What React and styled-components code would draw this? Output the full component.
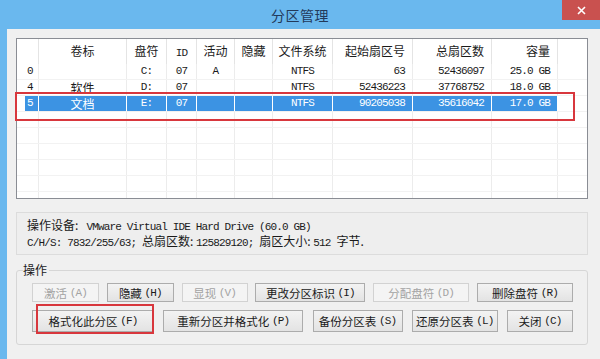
import React from "react";
import styled, { createGlobalStyle } from "styled-components";

const GlobalStyle = createGlobalStyle`
  html, body {
    margin: 0;
    padding: 0;
  }
  body {
    width: 600px;
    height: 359px;
    overflow: hidden;
    background: #f0f0f0;
    font-family: "Noto Sans CJK SC", "Liberation Sans", sans-serif;
    color: #1a1a1a;
  }
`;

const Window = styled.div`
  width: 600px;
  height: 359px;
  display: flex;
  flex-direction: column;
  background: #6ab8ee;
`;

const TitleBar = styled.div`
  height: 29px;
  flex: none;
  display: grid;
  grid-template-columns: 1fr auto 1fr;
  align-items: center;
`;

const Title = styled.div`
  grid-column: 2;
  font-size: 14px;
  color: #22395a;
  letter-spacing: 0.5px;
`;

const CloseButton = styled.div`
  grid-column: 3;
  justify-self: end;
  align-self: start;
  width: 38px;
  height: 20px;
  background: #c9514f;
  display: flex;
  align-items: center;
  justify-content: center;
`;

const Body = styled.div`
  flex: 1;
  margin-left: 7px;
  background: #f0f0f0;
  padding: 9px 12px 0 9px;
  display: flex;
  flex-direction: column;
`;

const Mono = styled.span`
  font-family: "Liberation Mono", "DejaVu Sans Mono", monospace;
  font-size: 11px;
  letter-spacing: -0.85px;
`;

const ListWrap = styled.div`
  position: relative;
`;

const List = styled.div`
  height: 161px;
  box-sizing: border-box;
  border: 1px solid #8a8d94;
  background: #fff;
  overflow: hidden;
`;

const Row = styled.div`
  display: grid;
  grid-template-columns: 22px 88px 40px 30px 38px 38px 60px 80px 79px 66px 1fr;
  height: ${({ $h }) => $h}px;
  box-sizing: border-box;
  border-bottom: 1px solid ${({ $head }) => ($head ? "#fff" : "#f2f2f2")};
`;

const Cell = styled.div`
  text-align: ${({ $align }) => $align};
  padding: ${({ $head }) => ($head ? "0 7px 0 0" : "1px 7px 0 0")};
  border-right: 1px solid ${({ $sel, $head }) => ($sel ? "#fff" : $head ? "#e4e4e4" : "#ececec")};
  background: ${({ $sel }) => ($sel ? "#3c93e3" : "transparent")};
  color: ${({ $sel }) => ($sel ? "#fff" : "#1a1a1a")};
  font-size: 12px;
  line-height: ${({ $head }) => ($head ? 24 : 14)}px;
  white-space: nowrap;

  & > ${Mono} {
    line-height: ${({ $head }) => ($head ? "inherit" : 1)};
    vertical-align: ${({ $head }) => ($head ? 0 : 3)}px;
  }
  &:first-child {
    margin-left: 8px;
    padding-left: 2px;
  }
  &:nth-child(n + 2):nth-child(-n + 7) {
    padding-left: 0;
    padding-right: 0;
  }
  &:last-child {
    border-right: none;
    background: transparent;
  }
`;

const Annot = styled.div`
  position: absolute;
  left: ${({ $x }) => $x}px;
  top: ${({ $y }) => $y}px;
  width: ${({ $w }) => $w}px;
  height: ${({ $h }) => $h}px;
  box-sizing: border-box;
  border: 2px solid #d8373d;
  pointer-events: none;
`;

const InfoBox = styled.div`
  margin-top: 13px;
  height: 43px;
  box-sizing: border-box;
  border: 1px solid #dcdcdc;
  background: #eeeeee;
  padding: 5px 10px 0;
  font-size: 12px;
  line-height: 14px;
  white-space: pre;
`;

const Group = styled.fieldset`
  margin: 8px 0 0;
  padding: 6px 14px 12px 15px;
  border: 1px solid #d6d6d6;
  border-radius: 3px;
  display: flex;
  flex-direction: column;
  gap: 8px;
`;

const Legend = styled.legend`
  margin-left: -9px;
  padding: 0 2px 0 0;
  font-size: 12px;
  line-height: 14px;
`;

const ButtonRow = styled.div`
  display: flex;
  justify-content: space-between;
`;

const Btn = styled.button`
  width: ${({ $w }) => $w}px;
  height: ${({ $tall }) => ($tall ? 22 : 19)}px;
  box-sizing: border-box;
  padding: 0;
  border: 1px solid ${({ disabled }) => (disabled ? "#d2d2d2" : "#acacac")};
  border-radius: 0;
  background: ${({ disabled }) =>
    disabled ? "#f4f4f4" : "linear-gradient(#f3f3f3, #e3e3e3)"};
  color: ${({ disabled }) => (disabled ? "#a3a3a3" : "#1a1a1a")};
  font-family: "Noto Sans CJK SC", sans-serif;
  font-size: 11.5px;
  line-height: 14px;
  display: flex;
  align-items: center;
  justify-content: center;
  white-space: pre;
`;

const Marked = styled.div`
  position: relative;
`;

const columns = ["left", "center", "center", "center", "center", "center", "center", "right", "right", "right", "left"];

const header = ["", "卷标", "盘符", <Mono key="id">ID</Mono>, "活动", "隐藏", "文件系统", "起始扇区号", "总扇区数", "容量", ""];

const partitions = [
  { id: "0", label: "", drive: "C:", type: "07", active: "A", fs: "NTFS", start: "63", total: "52436097", size: "25.0 GB" },
  { id: "4", label: "软件", drive: "D:", type: "07", active: "", fs: "NTFS", start: "52436223", total: "37768752", size: "18.0 GB" },
  { id: "5", label: "文档", drive: "E:", type: "07", active: "", fs: "NTFS", start: "90205038", total: "35616042", size: "17.0 GB", selected: true },
];

const EMPTY_ROWS = 6;

const App = () => {
  return (
    <>
      <GlobalStyle />
      <Window>
        <TitleBar>
          <Title>分区管理</Title>
          <CloseButton>
            <svg width="9" height="9" viewBox="0 0 9 9">
              <path d="M1 1 L8 8 M8 1 L1 8" stroke="#fff" strokeWidth="1.6" />
            </svg>
          </CloseButton>
        </TitleBar>
        <Body>
          <ListWrap>
            <List>
              <Row $h={25} $head>
                {header.map((h, i) => (
                  <Cell key={i} $head $align={columns[i]}>
                    {h}
                  </Cell>
                ))}
              </Row>
              {partitions.map((p) => {
                const values = [
                  <Mono>{p.id}</Mono>,
                  p.label,
                  <Mono>{p.drive}</Mono>,
                  <Mono>{p.type}</Mono>,
                  <Mono>{p.active}</Mono>,
                  "",
                  <Mono>{p.fs}</Mono>,
                  <Mono>{p.start}</Mono>,
                  <Mono>{p.total}</Mono>,
                  <Mono>{p.size}</Mono>,
                  "",
                ];
                return (
                  <Row key={p.id} $h={16}>
                    {values.map((v, i) => (
                      <Cell key={i} $sel={p.selected} $align={columns[i]}>
                        {v}
                      </Cell>
                    ))}
                  </Row>
                );
              })}
              {Array.from({ length: EMPTY_ROWS }).map((_, r) => (
                <Row key={"e" + r} $h={16}>
                  {columns.map((a, i) => (
                    <Cell key={i} $align={a} />
                  ))}
                </Row>
              ))}
            </List>
            <Annot $x={-1} $y={54} $w={560} $h={29} />
          </ListWrap>

          <InfoBox>
            {"操作设备:   "}
            <Mono>VMware Virtual IDE Hard Drive (60.0 GB)</Mono>
            {"\n"}
            <Mono>C/H/S: 7832/255/63; </Mono>
            {"总扇区数: "}
            <Mono>125829120; </Mono>
            {"扇区大小: "}
            <Mono>512 </Mono>
            {"字节."}
          </InfoBox>

          <Group>
            <Legend>操作</Legend>
            <ButtonRow>
              <Btn $w={67} disabled>
                激活 <Mono>(A)</Mono>
              </Btn>
              <Btn $w={67}>
                隐藏 <Mono>(H)</Mono>
              </Btn>
              <Btn $w={66} disabled>
                显现 <Mono>(V)</Mono>
              </Btn>
              <Btn $w={110}>
                更改分区标识 <Mono>(I)</Mono>
              </Btn>
              <Btn $w={96} disabled>
                分配盘符 <Mono>(D)</Mono>
              </Btn>
              <Btn $w={96}>
                删除盘符 <Mono>(R)</Mono>
              </Btn>
            </ButtonRow>
            <ButtonRow>
              <Marked>
                <Btn $w={122} $tall>
                  格式化此分区 <Mono>(F)</Mono>
                </Btn>
                <Annot $x={4} $y={-6} $w={118} $h={30} />
              </Marked>
              <Btn $w={140} $tall>
                重新分区并格式化 <Mono>(P)</Mono>
              </Btn>
              <Btn $w={90} $tall>
                备份分区表 <Mono>(S)</Mono>
              </Btn>
              <Btn $w={86} $tall>
                还原分区表 <Mono>(L)</Mono>
              </Btn>
              <Btn $w={66} $tall>
                关闭 <Mono>(C)</Mono>
              </Btn>
            </ButtonRow>
          </Group>
        </Body>
      </Window>
    </>
  );
};

export default App;
